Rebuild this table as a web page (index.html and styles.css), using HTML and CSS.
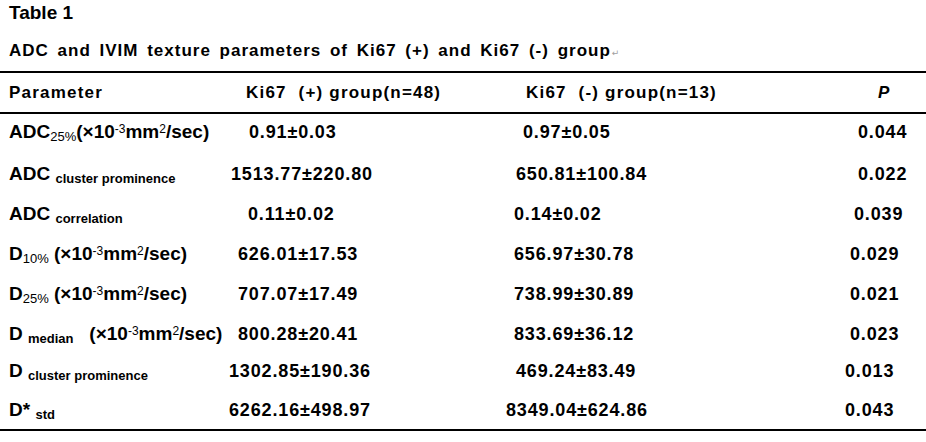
FILE: index.html
```html
<!DOCTYPE html>
<html lang="en">

<head>
	<meta charset="UTF-8">
	<meta name="viewport" content="width=device-width, initial-scale=1.0">
	<title>Table 1</title>
	<link rel="stylesheet" href="styles.css">
</head>

<body>
	<h1 class="title">Table 1</h1>
	<p class="caption">ADC and IVIM texture parameters of Ki67 (+) and Ki67 (-) group<span class="para-mark">↵</span></p>

	<div class="table">
		<div class="row head">
			<div class="cell">Parameter</div>
			<div class="cell in-17">Ki67&nbsp; (+) group(n=48)</div>
			<div class="cell in-20">Ki67&nbsp; (-) group(n=13)</div>
			<div class="cell in-33"><i>P</i></div>
		</div>

		<!-- body rows: the odd indents come from the spacing in the source document -->
		<div class="row tall">
			<div class="cell label">ADC<sub class="thin">25%</sub>(×10<sup>-3</sup>mm<sup>2</sup>/sec)</div>
			<div class="cell in-20">0.91±0.03</div>
			<div class="cell in-17">0.97±0.05</div>
			<div class="cell in-13">0.044</div>
		</div>
		<div class="row">
			<div class="cell label">ADC <sub>cluster prominence</sub></div>
			<div class="cell in-2">1513.77±220.80</div>
			<div class="cell in-10">650.81±100.84</div>
			<div class="cell in-13">0.022</div>
		</div>
		<div class="row">
			<div class="cell label">ADC <sub>correlation</sub></div>
			<div class="cell in-19">0.11±0.02</div>
			<div class="cell in-8">0.14±0.02</div>
			<div class="cell in-9">0.039</div>
		</div>
		<div class="row">
			<div class="cell label">D<sub class="thin">10%</sub> (×10<sup>-3</sup>mm<sup>2</sup>/sec)</div>
			<div class="cell in-9">626.01±17.53</div>
			<div class="cell in-8">656.97±30.78</div>
			<div class="cell in-5">0.029</div>
		</div>
		<div class="row">
			<div class="cell label">D<sub class="thin">25%</sub> (×10<sup>-3</sup>mm<sup>2</sup>/sec)</div>
			<div class="cell in-9">707.07±17.49</div>
			<div class="cell in-8">738.99±30.89</div>
			<div class="cell in-5">0.021</div>
		</div>
		<div class="row short">
			<div class="cell label">D <sub>median</sub>&nbsp;&nbsp; (×10<sup>-3</sup>mm<sup>2</sup>/sec)</div>
			<div class="cell in-9">800.28±20.41</div>
			<div class="cell in-8">833.69±36.12</div>
			<div class="cell in-5">0.023</div>
		</div>
		<div class="row snug">
			<div class="cell label">D <sub>cluster prominence</sub></div>
			<div class="cell">1302.85±190.36</div>
			<div class="cell in-10">469.24±83.49</div>
			<div class="cell">0.013</div>
		</div>
		<div class="row last">
			<div class="cell label">D* <sub>std</sub></div>
			<div class="cell">6262.16±498.97</div>
			<div class="cell">8349.04±624.86</div>
			<div class="cell">0.043</div>
		</div>
	</div>
</body>

</html>
```

FILE: styles.css
```css
* {
	margin: 0;
	padding: 0;
	box-sizing: border-box;
}

body {
	background: #fff;
	color: #000;
	font-family: "Liberation Sans", Arial, sans-serif;
	font-weight: 700;
}

.title {
	font-size: 19px;
	line-height: 25px;
	padding-left: 9px;
}

.caption {
	font-size: 17px;
	line-height: 26px;
	margin: 13px 0 5px;
	padding-left: 9px;
	letter-spacing: 1px;
	word-spacing: 3px;
}

.para-mark {
	font-family: "DejaVu Sans", sans-serif;
	font-size: 9px;
	font-weight: 400;
	color: #a0a0a0;
	letter-spacing: 0;
	margin-left: 1px;
}

.table {
	border-top: 2px solid #000;
	border-bottom: 2px solid #000;
}

.row {
	display: grid;
	grid-template-columns: 220px 277px 339px 1fr;
	align-items: baseline;
	padding-left: 9px;
	height: 40px;
	font-size: 18px;
	line-height: 36.6px;
	letter-spacing: 0.85px;
	white-space: nowrap;
}

.row.head {
	height: 41px;
	border-bottom: 2px solid #000;
	font-size: 17px;
	line-height: 39px;
	letter-spacing: 1.2px;
}

.row.tall {
	height: 42px;
}

.row.short {
	height: 37px;
}

.row.snug {
	height: 39px;
}

.row.last {
	height: 37px;
}

.label {
	font-size: 19px;
	letter-spacing: 0;
}

.label sub,
.label sup {
	line-height: 0;
}

.label sub {
	font-size: 13px;
	vertical-align: -3px;
}

.label sub.thin {
	font-weight: 400;
}

.label sup {
	font-size: 12px;
	font-weight: 400;
	vertical-align: 5px;
}

.in-2 { padding-left: 2px; }
.in-5 { padding-left: 5px; }
.in-8 { padding-left: 8px; }
.in-9 { padding-left: 9px; }
.in-10 { padding-left: 10px; }
.in-13 { padding-left: 13px; }
.in-17 { padding-left: 17px; }
.in-19 { padding-left: 19px; }
.in-20 { padding-left: 20px; }
.in-33 { padding-left: 33px; }
```
